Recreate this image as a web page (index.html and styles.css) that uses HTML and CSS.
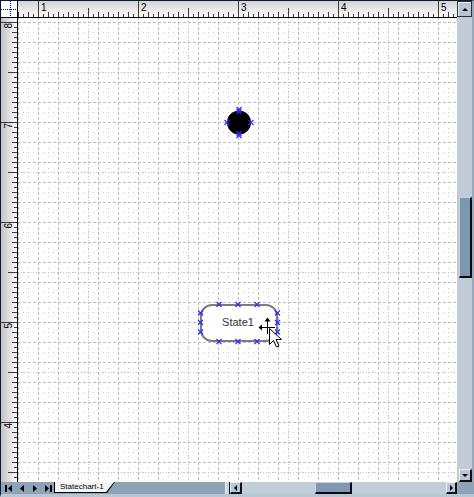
FILE: index.html
```html
<!DOCTYPE html>
<html>
<head>
<meta charset="utf-8">
<link rel="stylesheet" href="styles.css">
</head>
<body>
<div class="app">
  <div class="corner">
    <svg class="corner-svg" width="16" height="16" viewBox="0 0 16 16">
      <path d="M9.5 0V16M0 8.5H16" stroke="#0000d0" stroke-dasharray="1 1" fill="none" shape-rendering="crispEdges"/>
    </svg>
  </div>

  <div class="hruler">
    <svg width="439" height="16" viewBox="0 0 439 16">
      <defs>
        <pattern id="hticks" width="100" height="16" x="20" y="0" patternUnits="userSpaceOnUse">
          <path d="M0.5 0V16M5.5 16v-3M10.5 16v-5M15.5 16v-3M20.5 16v-5M25.5 16v-3M30.5 16v-5M35.5 16v-3M40.5 16v-5M45.5 16v-3M50.5 16v-9M55.5 16v-3M60.5 16v-5M65.5 16v-3M70.5 16v-5M75.5 16v-3M80.5 16v-5M85.5 16v-3M90.5 16v-5M95.5 16v-3" stroke="#3a3a3a" fill="none" shape-rendering="crispEdges"/>
        </pattern>
      </defs>
      <rect width="439" height="16" fill="url(#hticks)"/>
      <g class="rlabel">
        <text x="23" y="10">1</text>
        <text x="123" y="10">2</text>
        <text x="223" y="10">3</text>
        <text x="323" y="10">4</text>
        <text x="423" y="10">5</text>
      </g>
    </svg>
  </div>

  <div class="vscroll">
    <div class="sbtn sbtn-up"><span class="tri tri-up"></span></div>
    <div class="vtrack"><div class="vthumb"></div></div>
    <div class="sbtn sbtn-down"><span class="tri tri-down"></span></div>
  </div>

  <div class="vruler">
    <svg width="16" height="464" viewBox="0 0 16 464">
      <defs>
        <pattern id="vticks" width="16" height="100" x="0" y="4" patternUnits="userSpaceOnUse">
          <path d="M0 0.5H16M16 5.5h-3M16 10.5h-5M16 15.5h-3M16 20.5h-5M16 25.5h-3M16 30.5h-5M16 35.5h-3M16 40.5h-5M16 45.5h-3M16 50.5h-9M16 55.5h-3M16 60.5h-5M16 65.5h-3M16 70.5h-5M16 75.5h-3M16 80.5h-5M16 85.5h-3M16 90.5h-5M16 95.5h-3" stroke="#3a3a3a" fill="none" shape-rendering="crispEdges"/>
        </pattern>
      </defs>
      <rect width="16" height="464" fill="url(#vticks)"/>
      <g class="rlabel" text-anchor="end">
        <text transform="translate(11 5) rotate(-90)">8</text>
        <text transform="translate(11 105) rotate(-90)">7</text>
        <text transform="translate(11 205) rotate(-90)">6</text>
        <text transform="translate(11 305) rotate(-90)">5</text>
        <text transform="translate(11 405) rotate(-90)">4</text>
      </g>
    </svg>
  </div>

  <div class="canvas">
    <svg class="page" width="439" height="464" viewBox="0 0 439 464">
      <defs>
        <pattern id="grid" width="20" height="20" x="0" y="4" patternUnits="userSpaceOnUse">
          <path d="M0.5 0V20M0 0.5H20" stroke="#bdbdbd" stroke-dasharray="3 2" fill="none" shape-rendering="crispEdges"/>
          <g fill="#c4c4c4">
            <rect x="10" y="6" width="1" height="1"/>
            <rect x="10" y="10" width="1" height="1"/>
            <rect x="10" y="14" width="1" height="1"/>
            <rect x="5" y="10" width="1" height="1"/>
            <rect x="15" y="10" width="1" height="1"/>
          </g>
        </pattern>
        <pattern id="half" width="100" height="100" x="0" y="4" patternUnits="userSpaceOnUse">
          <path d="M70.5 0V100M0 50.5H100" stroke="#c4c4c4" stroke-dasharray="1 2" fill="none" shape-rendering="crispEdges"/>
        </pattern>
        <path id="mk" d="M-2.5 -2.5L2.5 2.5M-2.5 2.5L2.5 -2.5" stroke="#2a2aff" stroke-width="1.1" fill="none"/>
      </defs>
      <rect width="439" height="464" fill="#fff"/>
      <rect width="439" height="464" fill="url(#grid)"/>
      <rect width="439" height="464" fill="url(#half)"/>

      <circle cx="221" cy="104.5" r="12" fill="#000"/>
      <use href="#mk" x="221" y="91.5"/>
      <use href="#mk" x="221" y="93.5"/>
      <use href="#mk" x="221" y="115.5"/>
      <use href="#mk" x="221" y="117.5"/>
      <use href="#mk" x="209" y="104.5"/>
      <use href="#mk" x="233" y="104.5"/>

      <rect x="183" y="287" width="76" height="36" rx="11" ry="11" fill="#fff" stroke="#7c7c7c" stroke-width="2"/>
      <text class="state-label" x="220" y="308" text-anchor="middle">State1</text>
      <use href="#mk" x="201" y="286.5"/>
      <use href="#mk" x="220" y="286.5"/>
      <use href="#mk" x="239" y="286.5"/>
      <use href="#mk" x="201" y="323.5"/>
      <use href="#mk" x="220" y="323.5"/>
      <use href="#mk" x="239" y="323.5"/>
      <use href="#mk" x="182.5" y="295"/>
      <use href="#mk" x="182.5" y="304.5"/>
      <use href="#mk" x="182.5" y="314"/>
      <use href="#mk" x="259.5" y="295"/>
      <use href="#mk" x="259.5" y="304.5"/>
      <use href="#mk" x="259.5" y="314"/>
    </svg>
    <svg class="cursor" width="30" height="32" viewBox="0 0 30 32">
      <path d="M9.5 3V18M2 11.5H17" stroke="#000" fill="none" shape-rendering="crispEdges"/>
      <path d="M6.5 5.5L9.5 1.5L12.5 5.5Z M4 8.5L0.5 11.5L4 14.5Z" fill="#000"/>
      <path d="M11.5 12.5V28.5L15.5 24.5L18.5 31L21 30L18 23.5H23.5Z" fill="#fff" stroke="#000" stroke-width="1" stroke-linejoin="miter"/>
    </svg>
  </div>

  <div class="bottombar">
    <div class="nav">
      <svg width="53" height="12" viewBox="0 0 53 12">
        <g fill="#000">
          <rect x="4" y="3" width="2" height="7"/>
          <path d="M7 6.5L11 3V10Z"/>
          <path d="M19 6.5L23 3V10Z"/>
          <path d="M32 3L36 6.5L32 10Z"/>
          <path d="M44 3L48 6.5L44 10Z"/>
          <rect x="49" y="3" width="2" height="7"/>
        </g>
      </svg>
    </div>
    <div class="tab"><div class="tab-inner">Statechart-1</div></div>
    <div class="tabfill"></div>
    <div class="hscroll">
      <div class="splitter"></div>
      <div class="sbtn sbtn-left"><span class="tri tri-left"></span></div>
      <div class="htrack"><div class="hthumb"></div></div>
      <div class="sbtn sbtn-right"><span class="tri tri-right"></span></div>
    </div>
  </div>
  <div class="grip"></div>
</div>
</body>
</html>
```

FILE: styles.css
```css
html, body {
  margin: 0;
  padding: 0;
  background: #ffffff;
}

.app {
  display: grid;
  grid-template-columns: 18px 439px 17px;
  grid-template-rows: 18px 464px 15px;
  grid-template-areas:
    "corner hruler vscroll"
    "vruler canvas vscroll"
    "bottom bottom grip";
  width: 474px;
  height: 497px;
  font-family: "Liberation Sans", Arial, sans-serif;
  overflow: hidden;
}

.app svg {
  display: block;
}

.corner {
  grid-area: corner;
  box-sizing: border-box;
  background: #ffffff;
  border-top: 1px solid #0c1a2a;
  border-left: 1px solid #0c1a2a;
  border-right: 1px solid #000;
  border-bottom: 1px solid #000;
}

.hruler {
  grid-area: hruler;
  box-sizing: border-box;
  border-top: 1px solid #0c1a2a;
  border-bottom: 1px solid #000;
  background: linear-gradient(#d4d4d4, #fcfcfc);
  overflow: hidden;
}

.vruler {
  grid-area: vruler;
  box-sizing: border-box;
  border-left: 1px solid #0c1a2a;
  border-right: 1px solid #000;
  background: linear-gradient(to right, #c2c2c2, #fcfcfc);
  overflow: hidden;
}

.rlabel {
  font-family: "Liberation Sans", Arial, sans-serif;
  font-size: 10px;
  fill: #000;
}

.canvas {
  grid-area: canvas;
  position: relative;
  overflow: hidden;
  background: #fff;
}

.state-label {
  font-family: "Liberation Sans", Arial, sans-serif;
  font-size: 11px;
  fill: #333;
}

.cursor {
  position: absolute;
  left: 240px;
  top: 298px;
}

/* vertical scrollbar */
.vscroll {
  grid-area: vscroll;
  display: flex;
  flex-direction: column;
  box-sizing: border-box;
  background: #c0ccd8;
  border-top: 1px solid #0c1a2a;
  border-right: 2px solid #97a9bc;
}

.sbtn {
  box-sizing: border-box;
  display: flex;
  align-items: center;
  justify-content: center;
  background: #b8c6d4;
  border: 1px solid;
  border-color: #e9eff5 #111 #111 #e9eff5;
  flex: none;
}

.sbtn-up {
  width: 15px;
  height: 16px;
  border-color: #25323f;
  box-shadow: inset 1px 1px 0 #e9eff5;
}

.sbtn-down {
  width: 13px;
  height: 13px;
  margin-left: 2px;
  border-right-width: 2px;
  border-bottom-width: 2px;
}

.vtrack {
  flex: 1;
  padding-left: 2px;
}

.vthumb {
  margin-top: 180px;
  width: 13px;
  height: 81px;
  box-sizing: border-box;
  background: #7e97b0;
  border: 1px solid;
  border-color: #c4d0dc #0a0a0a #0a0a0a #c4d0dc;
  border-right-width: 2px;
  border-bottom-width: 2px;
}

.tri {
  width: 0;
  height: 0;
  display: block;
}

.tri-up {
  border-left: 3px solid transparent;
  border-right: 3px solid transparent;
  border-bottom: 3px solid #000;
}

.tri-down {
  border-left: 3px solid transparent;
  border-right: 3px solid transparent;
  border-top: 3px solid #000;
}

.tri-left {
  border-top: 3px solid transparent;
  border-bottom: 3px solid transparent;
  border-right: 3px solid #000;
}

.tri-right {
  border-top: 3px solid transparent;
  border-bottom: 3px solid transparent;
  border-left: 3px solid #000;
}

/* bottom bar */
.bottombar {
  grid-area: bottom;
  display: grid;
  grid-template-columns: 53px 61px 1fr 232px;
  box-sizing: border-box;
  height: 15px;
  background: #8ea3b8;
  border-left: 1px solid #0c1a2a;
  border-bottom: 3px solid #b7c6d4;
}

.nav {
  height: 12px;
}

.tab {
  align-self: start;
  height: 11px;
  box-sizing: border-box;
  padding: 0 1px 1px 1px;
  background: #000;
  clip-path: polygon(0 0, 100% 0, calc(100% - 8px) 100%, 0 100%);
}

.tab-inner {
  height: 10px;
  background: #f5f5f5;
  clip-path: polygon(0 0, 100% 0, calc(100% - 8px) 100%, 0 100%);
  font-family: "Liberation Sans", Arial, sans-serif;
  font-size: 8px;
  line-height: 10px;
  padding-left: 5px;
  color: #000;
  white-space: nowrap;
}

.tabfill {
  height: 12px;
}

.hscroll {
  display: flex;
  height: 12px;
  background: #c2cdd9;
}

.splitter {
  width: 5px;
  flex: none;
  box-sizing: border-box;
  background: #cbd6e1;
  border-left: 1px solid #eef3f8;
  border-right: 1px solid #111;
}

.sbtn-left {
  width: 12px;
  height: 12px;
  border-right-width: 2px;
  border-bottom-width: 2px;
}

.sbtn-right {
  width: 11px;
  height: 12px;
  border-right-width: 2px;
  border-bottom-width: 2px;
}

.htrack {
  flex: 1;
}

.hthumb {
  margin-left: 73px;
  width: 37px;
  height: 12px;
  box-sizing: border-box;
  background: #8098b0;
  border: 1px solid;
  border-color: #c4d0dc #0a0a0a #0a0a0a #c4d0dc;
  border-right-width: 2px;
  border-bottom-width: 2px;
}

.grip {
  grid-area: grip;
  box-sizing: border-box;
  background: #8ea3b8;
  border-bottom: 3px solid #b7c6d4;
}
```
